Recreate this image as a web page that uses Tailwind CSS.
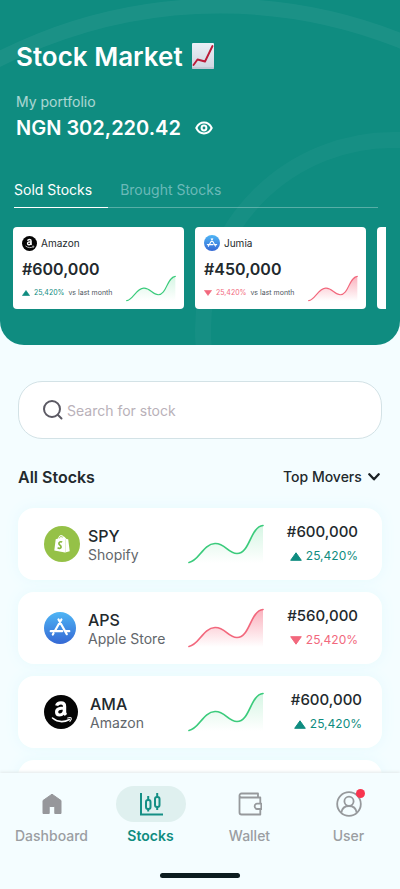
<!DOCTYPE html>
<html lang="en">
<head>
<meta charset="utf-8">
<meta name="viewport" content="width=device-width, initial-scale=1">
<title>Stock Market</title>
<script src="https://cdn.jsdelivr.net/npm/@tailwindcss/browser@4"></script>
</head>
<body class="bg-[#f4fdff] font-['Inter',sans-serif] text-[#22292d]">

<!-- Shared symbols -->
<svg class="absolute size-0" aria-hidden="true">
  <defs>
    <linearGradient id="gUp" x1="0" y1="0" x2="0" y2="1"><stop offset="0" stop-color="#34d178" stop-opacity=".2"/><stop offset="1" stop-color="#34d178" stop-opacity="0"/></linearGradient>
    <linearGradient id="gDown" x1="0" y1="0" x2="0" y2="1"><stop offset="0" stop-color="#f6647c" stop-opacity=".5"/><stop offset="1" stop-color="#f6647c" stop-opacity="0"/></linearGradient>
    <linearGradient id="gApp" x1="0" y1="0" x2="0" y2="1"><stop offset="0" stop-color="#4eb5f5"/><stop offset="1" stop-color="#3568d4"/></linearGradient>
    <linearGradient id="gSheet" x1="0" y1="0" x2="0" y2="1"><stop offset="0" stop-color="#eceff6"/><stop offset="1" stop-color="#cfd5e0"/></linearGradient>
  </defs>
  <symbol id="up" viewBox="0 0 76 40"><path d="M1 38.500C11 37 15 20 27 19.500C37 19 40 29.500 49 29.500C62 29.500 62 3 75 1.500V39H1Z" fill="url(#gUp)"/><path d="M1 38.500C11 37 15 20 27 19.500C37 19 40 29.500 49 29.500C62 29.500 62 3 75 1.500" fill="none" stroke="#3bcb7c" stroke-width="1.700" stroke-linecap="round"/></symbol>
  <symbol id="down" viewBox="0 0 76 40"><path d="M1 38.500C11 37 15 20 27 19.500C37 19 40 29.500 49 29.500C62 29.500 62 3 75 1.500V39H1Z" fill="url(#gDown)"/><path d="M1 38.500C11 37 15 20 27 19.500C37 19 40 29.500 49 29.500C62 29.500 62 3 75 1.500" fill="none" stroke="#f2687d" stroke-width="1.700" stroke-linecap="round"/></symbol>
  <symbol id="tri" viewBox="0 0 12 9"><path d="M6 .8 11.300 8.300H.7Z" fill="currentColor" stroke="currentColor" stroke-width="1" stroke-linejoin="round"/></symbol>
  <symbol id="amazon" viewBox="0 0 34 34">
    <circle cx="17" cy="17" r="17" fill="#050505"/>
    <path d="M12.600 10.600C13.200 8.600 14.900 7.800 17 7.800C19.600 7.800 20.600 9.200 20.600 11.300V17C20.600 18.300 21 19 21.900 20M20.400 13C15.300 13 12.600 14 12.600 17C12.600 19 13.800 20 15.500 20C18.400 20 20.400 17.700 20.400 14.700" fill="none" stroke="#fff" stroke-width="3.200"/>
    <path d="M8.500 23C13.500 27.200 20 27.400 25.500 24.500" fill="none" stroke="#fff" stroke-width="1.600" stroke-linecap="round"/>
    <path d="M23.700 23C25 22.600 26.800 22.500 27.200 23C27.500 23.600 26.900 25.300 25.900 26.300" fill="none" stroke="#fff" stroke-width="1.100" stroke-linecap="round"/>
  </symbol>
  <symbol id="appstore" viewBox="0 0 32 32">
    <circle cx="16" cy="16" r="16" fill="url(#gApp)"/>
    <g fill="none" stroke="#fff" stroke-width="2.200" stroke-linecap="round"><path d="M17.400 7.500 10.700 19.200M14.500 7.500 22.800 22.200M6.700 19.200H18.200M21.800 19.200H25.300M9.500 21.300 8.800 22.500"/></g>
  </symbol>
  <symbol id="shopify" viewBox="0 0 36 36">
    <circle cx="18" cy="18" r="18" fill="#95c147"/>
    <path d="M11.700 13.200 14 12.600C14.500 10.300 16 8.800 17.600 8.900C18.300 9 18.900 9.500 19.200 10.300L20.400 10.800L22.500 13L24.200 13.300L25.700 25.300L21 26.500L10.300 24.600Z" fill="#fff"/>
    <path d="M15.300 12.300C15.700 11 16.700 10.200 17.500 10.200C18.100 10.300 18.200 11.100 18.200 11.600" fill="none" stroke="#95c147" stroke-width=".9"/>
    <path d="M18.200 16.100C16.500 15.300 14.900 16 14.900 17.500C14.900 19.100 17.300 19.200 17.100 21.200C16.900 22.700 15 22.700 13.600 21.600" fill="none" stroke="#8ab93f" stroke-width="1.700"/>
    <path d="M21.500 13.300V26.300" stroke="#d8ebbb" stroke-width=".7"/>
  </symbol>
</svg>

<div class="flex h-dvh flex-col overflow-hidden">
  <main class="min-h-0 flex-1 overflow-hidden">
    <header class="relative overflow-hidden rounded-b-3xl bg-[#0f8c80] pt-10 pb-9 text-white">
      <svg class="pointer-events-none absolute inset-0 h-full w-full" viewBox="0 0 400 345" preserveAspectRatio="xMidYMid slice" fill="none" stroke="#fff" aria-hidden="true">
        <circle cx="220" cy="492" r="486" stroke-opacity=".05" stroke-width="15"/>
        <circle cx="393" cy="330" r="190" stroke-opacity=".03" stroke-width="16"/>
      </svg>
      <div class="relative">
        <h1 class="flex h-8 items-center gap-2 px-4 text-[26px] font-semibold">Stock Market
          <svg class="h-[26px] w-6" viewBox="0 0 24 26" aria-hidden="true"><rect x="1" y="0" width="22" height="26" rx="1" fill="url(#gSheet)"/><path d="M1 25H23" stroke="#b3bac6"/><path d="M2.500 22 6.500 16.500 14 18.500 21.500 3" fill="none" stroke="#bb1b38" stroke-width="1.900" stroke-linejoin="round" stroke-linecap="round"/></svg>
        </h1>
        <p class="mt-5 px-4 text-sm text-white/65">My portfolio</p>
        <div class="mt-1 flex items-center gap-3 px-4">
          <p class="text-xl leading-6 font-semibold">NGN 302,220.42</p>
          <button type="button" aria-label="Show or hide balance" class="p-0.5">
            <svg class="h-4 w-[18px]" viewBox="0 0 18 16" fill="none" stroke="#fff" stroke-width="2"><path d="M1.300 8C3 4.500 5.800 2.600 9 2.600S15 4.500 16.700 8C15 11.500 12.200 13.400 9 13.400S3 11.500 1.300 8Z"/><circle cx="9" cy="8" r="2.400"/></svg>
          </button>
        </div>
        <div role="tablist" class="mt-8 mr-[22px] ml-3.5 flex border-b border-white/30 text-sm">
          <button type="button" role="tab" aria-selected="true" class="-mb-px border-b border-white pt-1.5 pr-4 pb-[5px] leading-6">Sold Stocks</button>
          <button type="button" role="tab" aria-selected="false" class="-mb-px border-b border-transparent pt-1.5 pb-[5px] pl-3 leading-6 text-[#6bb9b8]">Brought Stocks</button>
        </div>
        <div class="mt-[19px] mr-3.5 ml-[13px] flex gap-[11px] overflow-hidden text-[#22292d]">
          <article class="flex h-[82px] w-[171px] shrink-0 flex-col rounded bg-white pt-2 pr-2 pl-[9px]">
            <h2 class="flex h-4 items-center gap-1 text-[10px]"><svg class="size-[15px]"><use href="#amazon"/></svg>Amazon</h2>
            <p class="mt-2 text-base leading-5 font-semibold">#600,000</p>
            <div class="flex">
              <p class="mt-2 flex h-3 flex-1 items-center gap-1 text-[7px] text-[#4e5560]"><svg class="h-1.5 w-2 text-[#0f8c80]"><use href="#tri"/></svg><span class="text-[#0f8c80]">25,420%</span><span>vs last month</span></p>
              <svg class="-mt-1 h-[27px] w-[50px]"><use href="#up"/></svg>
            </div>
          </article>
          <article class="flex h-[82px] w-[171px] shrink-0 flex-col rounded bg-white pt-2 pr-2 pl-[9px]">
            <h2 class="flex h-4 items-center gap-1 text-[10px]"><svg class="size-4"><use href="#appstore"/></svg>Jumia</h2>
            <p class="mt-2 text-base leading-5 font-semibold">#450,000</p>
            <div class="flex">
              <p class="mt-2 flex h-3 flex-1 items-center gap-1 text-[7px] text-[#4e5560]"><svg class="h-1.5 w-2 rotate-180 text-[#f2687d]"><use href="#tri"/></svg><span class="text-[#f2687d]">25,420%</span><span>vs last month</span></p>
              <svg class="-mt-1 h-[27px] w-[50px]"><use href="#down"/></svg>
            </div>
          </article>
          <article class="h-[82px] w-[171px] shrink-0 rounded bg-white"></article>
        </div>
      </div>
    </header>

    <section class="px-[18px] pt-9">
      <label class="flex h-[58px] items-center gap-1 rounded-3xl border border-[#d3e2e6] bg-white px-6">
        <svg class="size-5 shrink-0" viewBox="0 0 20 20" fill="none" stroke="#5b5963" stroke-width="2" stroke-linecap="round" aria-hidden="true"><circle cx="9" cy="9" r="8"/><path d="m15 15 3.500 3.500"/></svg>
        <input type="search" aria-label="Search for stock" placeholder="Search for stock" class="h-8 min-w-0 flex-1 bg-transparent text-sm outline-none placeholder:text-[#b9b1b9]">
      </label>

      <div class="mt-6 flex h-7 items-center justify-between">
        <h2 class="text-base font-semibold">All Stocks</h2>
        <div class="relative flex items-center">
          <select aria-label="Sort stocks" class="h-7 appearance-none bg-transparent pr-5 text-sm font-medium">
            <option>Top Movers</option>
          </select>
          <svg class="pointer-events-none absolute right-0.5 h-2 w-3" viewBox="0 0 12 8" fill="none" stroke="#1b2124" stroke-width="2.300" stroke-linecap="round" stroke-linejoin="round" aria-hidden="true"><path d="m1.300 1.300 4.700 5 4.700-5"/></svg>
        </div>
      </div>

      <ul class="mt-[17px] flex flex-col gap-3">
        <li class="flex h-[72px] items-center rounded-2xl bg-white pr-6 pl-[26px] shadow-[0_0_14px_#e6fafd]">
          <div class="flex flex-1 items-center gap-2"><svg class="size-9"><use href="#shopify"/></svg><div class="pt-0.5"><h3 class="text-base leading-5 font-medium">SPY</h3><p class="text-sm leading-[18px] text-[#62666b]">Shopify</p></div></div>
          <svg class="h-10 w-[76px]"><use href="#up"/></svg>
          <div class="flex w-[94px] flex-col items-end gap-1"><p class="text-[15px] leading-5 font-medium">#600,000</p><p class="flex items-center gap-1 text-xs leading-5 text-[#0f8c80]"><svg class="h-[9px] w-3"><use href="#tri"/></svg>25,420%</p></div>
        </li>
        <li class="flex h-[72px] items-center rounded-2xl bg-white pr-6 pl-[26px] shadow-[0_0_14px_#e6fafd]">
          <div class="flex flex-1 items-center gap-3"><svg class="size-8"><use href="#appstore"/></svg><div class="pt-0.5"><h3 class="text-base leading-5 font-medium">APS</h3><p class="text-sm leading-[18px] text-[#62666b]">Apple Store</p></div></div>
          <svg class="h-10 w-[76px]"><use href="#down"/></svg>
          <div class="flex w-[94px] flex-col items-end gap-1"><p class="text-[15px] leading-5 font-medium">#560,000</p><p class="flex items-center gap-1 text-xs leading-5 text-[#f2687d]"><svg class="h-[9px] w-3 rotate-180"><use href="#tri"/></svg>25,420%</p></div>
        </li>
        <li class="flex h-[72px] items-center rounded-2xl bg-white pr-5 pl-[26px] shadow-[0_0_14px_#e6fafd]">
          <div class="flex flex-1 items-center gap-3"><svg class="size-[34px]"><use href="#amazon"/></svg><div class="pt-0.5"><h3 class="text-base leading-5 font-medium">AMA</h3><p class="text-sm leading-[18px] text-[#62666b]">Amazon</p></div></div>
          <svg class="h-10 w-[76px]"><use href="#up"/></svg>
          <div class="flex w-[98px] flex-col items-end gap-1"><p class="text-[15px] leading-5 font-medium">#600,000</p><p class="flex items-center gap-1 text-xs leading-5 text-[#0f8c80]"><svg class="h-[9px] w-3"><use href="#tri"/></svg>25,420%</p></div>
        </li>
        <li class="h-[72px] rounded-2xl bg-white shadow-[0_0_14px_#e6fafd]"></li>
      </ul>
    </section>
  </main>

  <nav class="relative shrink-0 bg-[#f4fdff] px-0.5 pt-[13px] pb-[11px] shadow-[0_-1px_3px_#e3e9ea]">
    <div class="grid grid-cols-4 text-sm font-medium text-[#9b9ea2]">
      <a href="#" class="flex flex-col items-center gap-1">
        <span class="flex h-9 items-center"><svg class="h-[22px] w-5" viewBox="0 0 20 22" aria-hidden="true"><path d="M10 1.200 19 7.500V20.500H12.800V13.500H7.200V20.500H1V7.500Z" fill="#96979b" stroke="#96979b" stroke-linejoin="round"/></svg></span>
        Dashboard
      </a>
      <a href="#" aria-current="page" class="flex flex-col items-center gap-1 font-semibold text-[#0f8c80]">
        <span class="flex h-9 w-[70px] items-center justify-center rounded-full bg-[#dff0ef]"><svg class="size-6" viewBox="0 0 24 24" fill="none" stroke="#158f85" stroke-width="2" aria-hidden="true"><path d="M2 1V22.500H24"/><rect x="7" y="8" width="4.500" height="9" rx="2"/><path d="M9.200 4V8M9.200 17V19.500M18.200 1V5M18.200 15V18"/><rect x="16" y="5" width="4.500" height="10" rx="2"/></svg></span>
        Stocks
      </a>
      <a href="#" class="flex flex-col items-center gap-1">
        <span class="flex h-9 items-center"><svg class="size-6" viewBox="0 0 24 24" fill="none" stroke="#96999c" stroke-width="1.800" stroke-linejoin="round" aria-hidden="true"><path d="M20 5.500V1.500H3.500A2 2 0 0 0 1.500 3.500V20.500A2 2 0 0 0 3.500 22.500H22.300V17M22.300 11.500V5.500H3.500A2 2 0 0 1 1.500 3.700"/><path d="M23.300 11.700H18.800A2.700 2.700 0 0 0 18.800 17H23.300Z"/></svg></span>
        Wallet
      </a>
      <a href="#" class="flex flex-col items-center gap-1">
        <span class="relative flex h-9 items-center"><svg class="size-[26px]" viewBox="0 0 26 26" fill="none" stroke="#96999c" stroke-width="1.800" aria-hidden="true"><circle cx="13" cy="13" r="11.800"/><circle cx="13" cy="10.300" r="4.600"/><path d="M5.300 21.700C6 17.500 9 15 13 15S20 17.500 20.700 21.700"/></svg><span class="absolute top-[3px] -right-[3px] size-[9px] rounded-full bg-[#f8354f]"></span></span>
        User
      </a>
    </div>
    <div class="mx-auto mt-[27px] h-[5px] w-20 rounded-full bg-[#0c1c1f]"></div>
  </nav>
</div>
</body>
</html>
